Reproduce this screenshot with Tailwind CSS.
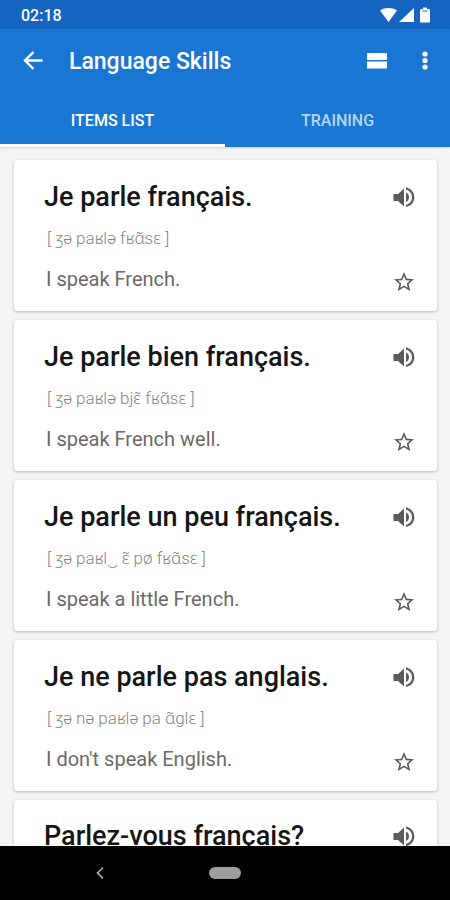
<!DOCTYPE html>
<html lang="en">
<head>
<meta charset="utf-8">
<meta name="viewport" content="width=device-width, initial-scale=1">
<title>Language Skills</title>
<script src="https://cdn.jsdelivr.net/npm/@tailwindcss/browser@4"></script>
</head>
<body class="flex h-dvh flex-col overflow-hidden bg-[#f4f4f4] font-[Roboto,'Noto_Sans',sans-serif]">
<svg class="hidden" aria-hidden="true">
  <symbol id="speaker" viewBox="0 0 24 24"><path d="M1.500 9v7h4.500l6 5.500V3.500L6 9zM14 7.500v9.500c1.800-.8 3-2.600 3-4.800s-1.200-3.900-3-4.700zM14 2.500v2.300c3.700.7 6 3.800 6 7.500s-2.300 6.800-6 7.500v2.300c5-.8 8.300-4.900 8.300-9.800S19 3.300 14 2.500z"/></symbol>
  <symbol id="star" viewBox="0 0 24 24"><path d="M22 9.240l-7.190-.62L12 2 9.190 8.630 2 9.240l5.460 4.730L5.820 21 12 17.270 18.180 21l-1.630-7.030L22 9.240zM12 15.400l-3.760 2.270 1-4.280-3.320-2.880 4.380-.38L12 6.100l1.710 4.040 4.380.38-3.320 2.880 1 4.280L12 15.400z"/></symbol>
</svg>

<div class="flex h-[29px] shrink-0 items-center justify-between bg-[#1565c0] pt-0.5 pr-5 pl-[21px] text-white">
  <span class="text-base font-medium">02:18</span>
  <div class="flex items-center gap-0.5 pb-0.5" aria-hidden="true">
    <svg class="h-4 w-[17px]" viewBox="0 0 17 16" fill="currentColor"><path d="M0 3.500C5 .3 12 .3 17 3.500L8.500 15z"/></svg>
    <svg class="h-4 w-[15px]" viewBox="0 0 15 16" fill="currentColor"><path d="M15 1v14H0z"/></svg>
    <svg class="ml-1 h-4 w-[10px]" viewBox="0 0 10 16" fill="currentColor"><path d="M3 .5h4V2h1.500Q10 2 10 3.500v11q0 1-1 1H1q-1 0-1-1v-11Q0 2 1.500 2H3z"/><path d="M2.500 4h5" stroke="#1565c0"/></svg>
  </div>
</div>

<header class="relative z-10 shrink-0 bg-[#1976d2] text-white shadow-sm">
  <div class="flex h-16 items-center pr-[13px] pl-[21px]">
    <button type="button" aria-label="Back" class="flex size-6 items-center justify-center">
      <svg class="size-6" viewBox="0 0 24 24" fill="none" stroke="currentColor" stroke-width="2.400"><path d="M21.500 11.500H4M12.500 3L4 11.500l8.500 8.500"/></svg>
    </button>
    <h1 class="ml-6 flex-1 pt-0.5 text-[23px] font-medium">Language Skills</h1>
    <button type="button" aria-label="Change view" class="flex h-6 w-6 items-center justify-center">
      <svg class="h-4 w-5" viewBox="0 0 20 16" fill="currentColor"><path d="M0 0h20v7H0zM0 8.500h20v7H0z"/></svg>
    </button>
    <button type="button" aria-label="More options" class="ml-6 flex size-6 items-center justify-center">
      <svg class="h-5 w-2" viewBox="0 0 8 20" fill="currentColor"><circle cx="4" cy="3" r="2.600"/><circle cx="4" cy="9.500" r="2.600"/><circle cx="4" cy="16" r="2.600"/></svg>
    </button>
  </div>
  <div role="tablist" class="grid h-[54px] grid-cols-2 text-base font-medium">
    <button type="button" role="tab" aria-selected="true" class="border-b-3 border-white pt-1">ITEMS LIST</button>
    <button type="button" role="tab" aria-selected="false" class="border-b-3 border-[#1976d2] pt-1 text-[#b5d5f5]">TRAINING</button>
  </div>
</header>

<main class="min-h-0 flex-1 overflow-y-auto pt-[13px] pr-[13px] pl-3.5 [scrollbar-width:none]">
  <ul class="flex flex-col gap-[9px]">
    <li class="flex h-[151px] justify-between rounded-[3px] bg-white pt-[17px] pr-[21px] pb-[17px] pl-[30px] shadow-[0_1px_3px_rgba(0,0,0,0.25)]">
      <div>
        <h2 lang="fr" class="text-[27px] leading-10 font-medium text-[#151515]">Je parle français.</h2>
        <p class="ml-[3px] pt-[9px] text-[17px] leading-6 font-light text-[#858585]">[ ʒə paʁlə fʁɑ̃sɛ ]</p>
        <p class="ml-0.5 pt-[17px] text-xl leading-6 text-[#6a6a6a]">I speak French.</p>
      </div>
      <div class="flex flex-col justify-between pt-2 text-[#5c5c5c]">
        <button type="button" aria-label="Play" class="size-6"><svg class="size-6" fill="currentColor"><use href="#speaker"/></svg></button>
        <button type="button" aria-label="Favourite" class="size-6"><svg class="size-6" fill="currentColor"><use href="#star"/></svg></button>
      </div>
    </li>
    <li class="flex h-[151px] justify-between rounded-[3px] bg-white pt-[17px] pr-[21px] pb-[17px] pl-[30px] shadow-[0_1px_3px_rgba(0,0,0,0.25)]">
      <div>
        <h2 lang="fr" class="text-[27px] leading-10 font-medium text-[#151515]">Je parle bien français.</h2>
        <p class="ml-[3px] pt-[9px] text-[17px] leading-6 font-light text-[#858585]">[ ʒə paʁlə bjɛ̃ fʁɑ̃sɛ ]</p>
        <p class="ml-0.5 pt-[17px] text-xl leading-6 text-[#6a6a6a]">I speak French well.</p>
      </div>
      <div class="flex flex-col justify-between pt-2 text-[#5c5c5c]">
        <button type="button" aria-label="Play" class="size-6"><svg class="size-6" fill="currentColor"><use href="#speaker"/></svg></button>
        <button type="button" aria-label="Favourite" class="size-6"><svg class="size-6" fill="currentColor"><use href="#star"/></svg></button>
      </div>
    </li>
    <li class="flex h-[151px] justify-between rounded-[3px] bg-white pt-[17px] pr-[21px] pb-[17px] pl-[30px] shadow-[0_1px_3px_rgba(0,0,0,0.25)]">
      <div>
        <h2 lang="fr" class="text-[27px] leading-10 font-medium text-[#151515]">Je parle un peu français.</h2>
        <p class="ml-[3px] pt-[9px] text-[17px] leading-6 font-light text-[#858585]">[ ʒə paʁl‿ ɛ̃ pø fʁɑ̃sɛ ]</p>
        <p class="ml-0.5 pt-[17px] text-xl leading-6 text-[#6a6a6a]">I speak a little French.</p>
      </div>
      <div class="flex flex-col justify-between pt-2 text-[#5c5c5c]">
        <button type="button" aria-label="Play" class="size-6"><svg class="size-6" fill="currentColor"><use href="#speaker"/></svg></button>
        <button type="button" aria-label="Favourite" class="size-6"><svg class="size-6" fill="currentColor"><use href="#star"/></svg></button>
      </div>
    </li>
    <li class="flex h-[151px] justify-between rounded-[3px] bg-white pt-[17px] pr-[21px] pb-[17px] pl-[30px] shadow-[0_1px_3px_rgba(0,0,0,0.25)]">
      <div>
        <h2 lang="fr" class="text-[27px] leading-10 font-medium text-[#151515]">Je ne parle pas anglais.</h2>
        <p class="ml-[3px] pt-[9px] text-[17px] leading-6 font-light text-[#858585]">[ ʒə nə paʁlə pa ɑ̃glɛ ]</p>
        <p class="ml-0.5 pt-[17px] text-xl leading-6 text-[#6a6a6a]">I don't speak English.</p>
      </div>
      <div class="flex flex-col justify-between pt-2 text-[#5c5c5c]">
        <button type="button" aria-label="Play" class="size-6"><svg class="size-6" fill="currentColor"><use href="#speaker"/></svg></button>
        <button type="button" aria-label="Favourite" class="size-6"><svg class="size-6" fill="currentColor"><use href="#star"/></svg></button>
      </div>
    </li>
    <li class="flex justify-between rounded-[3px] bg-white pt-4 pr-[21px] pb-[18px] pl-[30px] shadow-[0_1px_3px_rgba(0,0,0,0.25)]">
      <h2 lang="fr" class="text-[27px] leading-10 font-medium text-[#151515]">Parlez-vous français?</h2>
      <div class="pt-2 text-[#5c5c5c]">
        <button type="button" aria-label="Play" class="size-6"><svg class="size-6" fill="currentColor"><use href="#speaker"/></svg></button>
      </div>
    </li>
  </ul>
</main>

<nav aria-label="System" class="relative z-10 grid h-[54px] shrink-0 grid-cols-[1fr_auto_1fr] items-center bg-black text-[#9e9e9e]">
  <button type="button" aria-label="Back" class="ml-[88px] flex size-6 items-center justify-center justify-self-start">
    <svg class="h-3 w-2" viewBox="0 0 8 12" fill="none" stroke="currentColor" stroke-width="1.800"><path d="M7 .7L1.500 6 7 11.300"/></svg>
  </button>
  <button type="button" aria-label="Home" class="h-3 w-8 rounded-full bg-[#9e9e9e]"></button>
</nav>
</body>
</html>
